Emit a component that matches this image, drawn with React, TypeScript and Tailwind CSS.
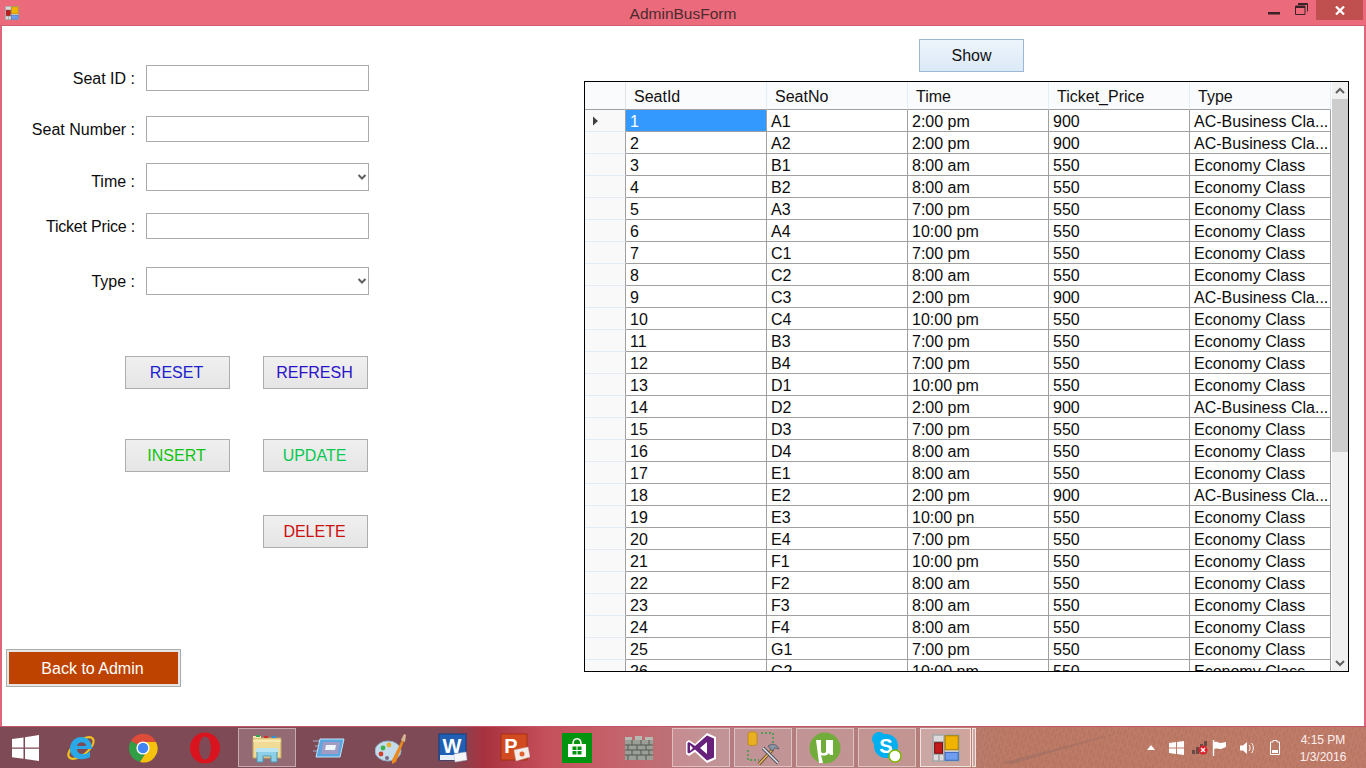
import type { ReactNode } from 'react'

const SEATS = [
  ['1', 'A1', '2:00 pm', '900', 'AC-Business Cla...'],
  ['2', 'A2', '2:00 pm', '900', 'AC-Business Cla...'],
  ['3', 'B1', '8:00 am', '550', 'Economy Class'],
  ['4', 'B2', '8:00 am', '550', 'Economy Class'],
  ['5', 'A3', '7:00 pm', '550', 'Economy Class'],
  ['6', 'A4', '10:00 pm', '550', 'Economy Class'],
  ['7', 'C1', '7:00 pm', '550', 'Economy Class'],
  ['8', 'C2', '8:00 am', '550', 'Economy Class'],
  ['9', 'C3', '2:00 pm', '900', 'AC-Business Cla...'],
  ['10', 'C4', '10:00 pm', '550', 'Economy Class'],
  ['11', 'B3', '7:00 pm', '550', 'Economy Class'],
  ['12', 'B4', '7:00 pm', '550', 'Economy Class'],
  ['13', 'D1', '10:00 pm', '550', 'Economy Class'],
  ['14', 'D2', '2:00 pm', '900', 'AC-Business Cla...'],
  ['15', 'D3', '7:00 pm', '550', 'Economy Class'],
  ['16', 'D4', '8:00 am', '550', 'Economy Class'],
  ['17', 'E1', '8:00 am', '550', 'Economy Class'],
  ['18', 'E2', '2:00 pm', '900', 'AC-Business Cla...'],
  ['19', 'E3', '10:00 pn', '550', 'Economy Class'],
  ['20', 'E4', '7:00 pm', '550', 'Economy Class'],
  ['21', 'F1', '10:00 pm', '550', 'Economy Class'],
  ['22', 'F2', '8:00 am', '550', 'Economy Class'],
  ['23', 'F3', '8:00 am', '550', 'Economy Class'],
  ['24', 'F4', '8:00 am', '550', 'Economy Class'],
  ['25', 'G1', '7:00 pm', '550', 'Economy Class'],
  ['26', 'G2', '10:00 pm', '550', 'Economy Class'],
]

const HEADERS = ['SeatId', 'SeatNo', 'Time', 'Ticket_Price', 'Type']

function FormIcon({ size = 16 }: { size?: number }) {
  return (
    <svg width={size} height={size} viewBox="0 0 16 16">
      <rect x="0.5" y="0.5" width="15" height="15" fill="#dcdcdc" stroke="#a8a8a8" />
      <path d="M0 4.500h7M7 0v16M0 11.500h7M4 11.500V16" stroke="#a8a8a8" />
      <rect x="7.500" y="1" width="7.500" height="8" fill="#f0b400" stroke="#a87a00" strokeWidth="0.6" />
      <rect x="7.500" y="10.500" width="7.500" height="4.500" fill="#6f9df0" stroke="#3d67b8" strokeWidth="0.6" />
      <rect x="1.500" y="5" width="4.500" height="6" fill="#c41a1a" stroke="#7a0f0f" strokeWidth="0.6" />
    </svg>
  )
}

function Field({
  label,
  select,
  className,
  labelClass,
}: {
  label: string
  select?: boolean
  className: string
  labelClass?: string
}) {
  return (
    <div className={`flex items-center ${className}`}>
      <span className={`w-[133px] whitespace-nowrap text-right text-[#0c0c0c] ${labelClass ?? 'pt-[2px]'}`}>
        {label} :
      </span>
      <div
        className={`relative ml-[11px] w-[223px] border border-[#ababab] bg-white ${select ? 'h-[28px]' : 'h-[26px]'}`}
      >
        {select ? (
          <svg className="absolute right-[1px] top-[8px]" width="10" height="10" viewBox="0 0 10 10">
            <path d="M1.500 3 5 6.500 8.500 3" fill="none" stroke="#606060" strokeWidth="2" />
          </svg>
        ) : null}
      </div>
    </div>
  )
}

function GrayButton({ text, color }: { text: string; color: string }) {
  return (
    <button
      type="button"
      className={`h-[33px] w-[105px] border border-[#adadad] bg-gradient-to-b from-[#f0f0f0] to-[#e5e5e5] pr-[2px] text-center ${color}`}
    >
      {text}
    </button>
  )
}

function DataGrid() {
  return (
    <div className="relative h-[591px] w-[765px] overflow-hidden border border-black bg-white">
      {/* header */}
      <div className="flex h-[28px] bg-[#fafbfc] text-[#111]">
        <div className="w-[41px] border-r border-b border-r-[#dfe3e8] border-b-[#a0a0a0]" />
        {HEADERS.map((h) => (
          <div
            key={h}
            className="flex w-[141px] items-center border-r border-b border-r-[#e3edf8] border-b-[#a0a0a0] pl-[8px] pt-[3px]"
          >
            {h}
          </div>
        ))}
      </div>
      {/* rows */}
      {SEATS.map((row, i) => (
        <div key={row[0]} className="flex h-[22px] text-[#0c0c0c]">
          <div className="flex w-[41px] items-center border-r border-b border-r-[#a0a0a0] border-b-[#e4edf7] bg-[#f9f9f9] pl-[7px]">
            {i === 0 ? (
              <svg width="7" height="10" viewBox="0 0 7 10">
                <path d="M1 0.500 6 5 1 9.500Z" fill="#404040" />
              </svg>
            ) : null}
          </div>
          {row.map((cell, c) => (
            <div
              key={c}
              className={`flex w-[141px] items-center whitespace-nowrap border-r border-b border-[#a0a0a0] pl-[4px] pt-[2px] ${i === 0 && c === 0 ? 'bg-[#3399ff] text-white' : ''}`}
            >
              {cell}
            </div>
          ))}
        </div>
      ))}
      {/* scrollbar */}
      <div className="absolute right-0 top-0 flex h-full w-[16px] flex-col bg-[#f0f0f0]">
        <div className="flex h-[17px] items-center justify-center">
          <svg width="10" height="8" viewBox="0 0 10 8">
            <path d="M1 6 5 2 9 6" fill="none" stroke="#606060" strokeWidth="2" />
          </svg>
        </div>
        <div className="h-[353px] bg-[#cdcdcd]" />
        <div className="flex-1" />
        <div className="flex h-[17px] items-center justify-center">
          <svg width="10" height="8" viewBox="0 0 10 8">
            <path d="M1 2 5 6 9 2" fill="none" stroke="#606060" strokeWidth="2" />
          </svg>
        </div>
      </div>
    </div>
  )
}

function TaskSlot({ children, boxed }: { children: ReactNode; boxed?: boolean }) {
  return (
    <div className="flex h-[41px] w-[62px] items-center justify-center">
      <div
        className={`flex h-[39px] w-[58px] items-center justify-center ${
          boxed ? 'border border-[#ffffff70] bg-[#ffffff2e]' : ''
        }`}
      >
        {children}
      </div>
    </div>
  )
}

const IeIcon = (
  <svg width="32" height="32" viewBox="0 0 32 32">
    <ellipse cx="16" cy="16" rx="15" ry="7" fill="none" stroke="#f0c020" strokeWidth="2.200" transform="rotate(-38 16 16)" />
    <path d="M5 17C5 9 11 5 16 5c6 0 11 4 11 12H12c0 6 9 7 13 2v6c-5 3-13 3-17-1-2-2-3-4-3-7Zm7-3h9c0-5-8-5-9 0Z" fill="#29a9e8" />
  </svg>
)

const ChromeIcon = (
  <svg width="30" height="30" viewBox="0 0 30 30">
    <path d="M15 15 3 8A14 14 0 0 1 28 9L15 9Z" fill="#dd4b39" />
    <path d="M15 15 3 8a14 14 0 0 0 9 21l7-11Z" fill="#2f9e44" />
    <path d="M15 9h13a14 14 0 0 1-16 20l7-11Z" fill="#f4c20d" />
    <circle cx="15" cy="15" r="6.600" fill="#fff" />
    <circle cx="15" cy="15" r="5.200" fill="#4285f4" />
  </svg>
)

const OperaIcon = (
  <svg width="32" height="32" viewBox="0 0 32 32">
    <path
      d="M1 16a15 15.500 0 1 0 30 0a15 15.500 0 1 0-30 0ZM10 16a6 11.500 0 1 1 12 0a6 11.500 0 1 1-12 0Z"
      fill="#d9141e"
      fillRule="evenodd"
    />
  </svg>
)

const ExplorerIcon = (
  <svg width="32" height="32" viewBox="0 0 32 32">
    <path d="M2 6h28v20H2Z" fill="#f0dc96" stroke="#c0a860" />
    <path d="M2 4h8v2H2Z" fill="#f4e8b0" />
    <path d="M5 3h4v2H5Z" fill="#2fa84f" />
    <path d="M13 4h4v2h-4Z" fill="#d03030" />
    <path d="M21 4h4v2h-4Z" fill="#2f8fd8" />
    <path d="M2 9h28" stroke="#fff6c8" />
    <path d="M6 30V18h20v12h-6v-6h-8v6Z" fill="#8ccfe8" stroke="#4a94b8" />
    <path d="M4 20h24l-2-4H6Z" fill="#b8e4f4" />
  </svg>
)

const CardIcon = (
  <svg width="32" height="24" viewBox="0 0 32 24">
    <path d="M0 5h7M2 10h5M0 15h5" stroke="#9fb0d0" />
    <path d="M7 3h24l-4 18H3Z" fill="#5aa6e0" stroke="#bfe4fa" />
    <path d="M10 6h17l-2 12H8Z" fill="#a09cc4" />
    <path d="M13 9h10l-1 5H12Z" fill="#eef6fc" />
  </svg>
)

const PaintIcon = (
  <svg width="32" height="32" viewBox="0 0 32 32">
    <ellipse cx="13" cy="19" rx="13" ry="10" fill="#c4dcec" stroke="#8fb0c8" />
    <circle cx="8" cy="16" r="2.400" fill="#3bb24a" />
    <circle cx="14" cy="13" r="2.400" fill="#e8b030" />
    <circle cx="6" cy="22" r="2.400" fill="#d04030" />
    <circle cx="12" cy="26" r="2" fill="#7a6a8a" />
    <path d="M17 28 27 8l2 1-8 21-4 2Z" fill="#e88a20" />
    <path d="M26 8l3-6 2 1-1 7Z" fill="#d8b890" />
  </svg>
)

const WordIcon = (
  <svg width="30" height="30" viewBox="0 0 30 30">
    <rect x="1" y="1" width="27" height="26" fill="#1f5fb4" stroke="#123f80" />
    <path d="M2 22h24v5H2Z" fill="#e8eef6" />
    <path d="M16 21l12-2 1 8-12 2Z" fill="#f4f6fa" stroke="#b8c4d4" strokeWidth="0.500" />
    <text x="14" y="20" textAnchor="middle" fontSize="20" fontWeight="700" fill="#fff" fontFamily="Liberation Sans">W</text>
  </svg>
)

const PptIcon = (
  <svg width="30" height="30" viewBox="0 0 30 30">
    <rect x="1" y="1" width="26" height="26" fill="#d24a20" stroke="#a83010" />
    <path d="M14 17l14-3 2 10-14 4Z" fill="#f4ece8" stroke="#c8b0a8" strokeWidth="0.500" />
    <circle cx="22" cy="21" r="2.500" fill="#e06030" />
    <text x="11" y="20" textAnchor="middle" fontSize="20" fontWeight="700" fill="#fff" fontFamily="Liberation Sans">P</text>
  </svg>
)

const StoreIcon = (
  <svg width="30" height="30" viewBox="0 0 30 30">
    <rect width="30" height="30" fill="#00940f" />
    <path d="M6 11h18v13H6Z" fill="#fff" />
    <path d="M11 11c0-7 8-7 8 0" fill="none" stroke="#fff" strokeWidth="1.600" />
    <path d="M10.500 13.500h4v3.500h-4ZM15.500 13.500h4v3.500h-4ZM10.500 18h4v3.500h-4ZM15.500 18h4v3.500h-4Z" fill="#00940f" />
  </svg>
)

const WallIcon = (
  <svg width="30" height="26" viewBox="0 0 30 26">
    <path d="M1 5h28v20H1Z" fill="#9a9f98" />
    <path d="M1 2h7v3H1ZM11 1h7v4h-7ZM21 2h8v3h-8Z" fill="#b4b9b2" />
    <path d="M1 10h28M1 15h28M1 20h28M8 5v5M17 5v5M25 5v5M4 10v5M13 10v5M22 10v5M8 15v5M17 15v5M25 15v5M4 20v5M13 20v5M22 20v5" stroke="#55594f" />
  </svg>
)

const VsIcon = (
  <svg width="32" height="32" viewBox="0 0 32 32">
    <path d="M22 1 31 5v22l-9 4-12-11-6 4-3-2V10l3-2 6 4Z" fill="#fff" />
    <path d="M22 3.500 29 6.500v19l-7 3-12-11-6 4-1.500-1V11l1.500-1 6 4ZM22 10l-7 6 7 6ZM5 13v6l3-3Z" fill="#68217a" fillRule="evenodd" />
  </svg>
)

const ToolsIcon = (
  <svg width="32" height="34" viewBox="0 0 32 34">
    <path d="M1 3c0-3 9-3 9 0v10c0 2-9 2-9 0Z" fill="#e8b020" stroke="#a87800" strokeWidth="0.600" />
    <path d="M14 2h12v11M1 19v10h11" fill="none" stroke="#2f9e44" strokeWidth="1.400" strokeDasharray="2 2" />
    <path d="M12 33 26 18" stroke="#5a4420" strokeWidth="3.200" />
    <path d="M12 33 26 18" stroke="#e8b860" strokeWidth="1.600" />
    <path d="M16 17 31 32" stroke="#3c4450" strokeWidth="3.200" />
    <path d="M16 17 31 32" stroke="#e4e8ee" strokeWidth="1.600" />
    <path d="M21 15c4-3 9-2 11 3l-4-1-3 3Z" fill="#8894a4" stroke="#3c4450" strokeWidth="0.600" />
  </svg>
)

const TorrentIcon = (
  <svg width="32" height="32" viewBox="0 0 32 32">
    <circle cx="16" cy="16" r="15.500" fill="#72ad3b" />
    <path d="M7 8h5v11c0 3 5 3 5 0V8h7v15h-3l-1-2c-2 3-6 3-8 2l2 8h-4Z" fill="#fff" />
  </svg>
)

const SkypeIcon = (
  <svg width="32" height="32" viewBox="0 0 32 32">
    <circle cx="15" cy="14" r="12" fill="#00aff0" />
    <circle cx="8" cy="7" r="7" fill="#00aff0" />
    <text x="15" y="21" textAnchor="middle" fontSize="20" fontWeight="700" fill="#fff" fontFamily="Liberation Sans">S</text>
    <circle cx="24" cy="24" r="6" fill="#fff" stroke="#7ab800" strokeWidth="1.500" />
  </svg>
)

function TraySlot({ width, children }: { width: string; children: ReactNode }) {
  return <div className={`flex items-center justify-center ${width}`}>{children}</div>
}

function Taskbar() {
  return (
    <div className="relative flex h-[41px] items-center overflow-hidden bg-[linear-gradient(90deg,#7d4a56_0%,#7d4a56_33%,#a8323e_35.500%,#c5505c_40%,#c4666e_46%,#b47c80_52%,#b57e7a_68%,#bd7a66_74%,#c07c6a_100%)]">
      {/* wallpaper showing through the glass */}
      <svg className="absolute inset-0" width="1366" height="41" viewBox="0 0 1366 41">
        <defs>
          <pattern id="straw" width="7" height="9" patternUnits="userSpaceOnUse" patternTransform="rotate(14)">
            <path d="M1 0v6M4 3v6" stroke="#8e5a40" strokeWidth="0.800" opacity="0.45" />
          </pattern>
        </defs>
        <path d="M975 0h391v41H975Z" fill="url(#straw)" />
        <path d="M1000 36 1117 6l8-2L1012 37Z" fill="#9c6e66" opacity="0.6" />
      </svg>
      <div className="relative flex h-full w-[50px] items-center justify-center">
        <svg width="27" height="26" viewBox="0 0 27 26">
          <path d="M0 4 11.500 2.400V12.400H0ZM13 2.200 27 0V12.400H13ZM0 13.800H11.500V23.800L0 22.200ZM13 13.800H27V26L13 24Z" fill="#fff" />
        </svg>
      </div>
      <div className="relative flex h-full">
        <TaskSlot>{IeIcon}</TaskSlot>
        <TaskSlot>{ChromeIcon}</TaskSlot>
        <TaskSlot>{OperaIcon}</TaskSlot>
        <TaskSlot boxed>{ExplorerIcon}</TaskSlot>
        <TaskSlot>{CardIcon}</TaskSlot>
        <TaskSlot>{PaintIcon}</TaskSlot>
        <TaskSlot>{WordIcon}</TaskSlot>
        <TaskSlot>{PptIcon}</TaskSlot>
        <TaskSlot>{StoreIcon}</TaskSlot>
        <TaskSlot>{WallIcon}</TaskSlot>
        <TaskSlot boxed>{VsIcon}</TaskSlot>
        <TaskSlot boxed>{ToolsIcon}</TaskSlot>
        <TaskSlot boxed>{TorrentIcon}</TaskSlot>
        <TaskSlot boxed>{SkypeIcon}</TaskSlot>
        <div className="ml-[2px] flex h-full items-center">
          <div className="flex h-[39px] w-[51px] items-center justify-center border border-[#ffffffb0] bg-[#ffffff50]">
            <FormIcon size={28} />
          </div>
          <div className="ml-[1px] h-[39px] w-[4px] border border-[#ffffffb0] bg-[#ffffff50]" />
        </div>
      </div>
      <div className="relative ml-auto flex h-full items-center text-white">
        <TraySlot width="w-[14px]">
          <svg width="8" height="5" viewBox="0 0 8 5">
            <path d="M0 5 4 0 8 5Z" fill="#fff" />
          </svg>
        </TraySlot>
        <TraySlot width="w-[36px]">
          <svg width="15" height="14" viewBox="0 0 15 14">
            <path d="M0 2 7 1V6.500H0ZM8 1 15 0V6.500H8ZM0 7.500H7V13L0 12ZM8 7.500H15V14L8 13Z" fill="#fff" />
          </svg>
        </TraySlot>
        <TraySlot width="w-[12px]">
          <svg className="shrink-0" width="18" height="14" viewBox="0 0 18 14">
            <path d="M1 9h3v4H1ZM5 6h3v7H5ZM9 3h3v5H9ZM13 0h3v5h-3Z" fill="#6a4a46" />
            <circle cx="12" cy="9" r="4.500" fill="#d8202a" />
            <path d="M10 7l4 4M14 7l-4 4" stroke="#fff" strokeWidth="1.400" />
          </svg>
        </TraySlot>
        <TraySlot width="w-[28px]">
          <svg width="16" height="16" viewBox="0 0 16 16">
            <path d="M1.500 0V16" stroke="#fff" strokeWidth="1.400" />
            <path d="M2 2c4-1 4 1 7 1l5-1v5l-5 2c-3 0-3-1-7 0Z" fill="#fff" />
          </svg>
        </TraySlot>
        <TraySlot width="w-[26px]">
          <svg width="16" height="14" viewBox="0 0 16 14">
            <path d="M1 4.500h3L8 1v12L4 9.500H1Z" fill="#fff" />
            <path d="M10 4c1.500 2 1.500 4 0 6M12.500 2c2.500 3 2.500 7 0 10" fill="none" stroke="#fff" />
          </svg>
        </TraySlot>
        <TraySlot width="w-[30px]">
          <svg width="10" height="15" viewBox="0 0 10 15">
            <path d="M3 0.500h4V2h2.500v12.500H.5V2H3Z" fill="none" stroke="#fff" />
            <rect x="2" y="10" width="6" height="3" fill="#fff" />
          </svg>
        </TraySlot>
        <div className="ml-[8px] mr-[18px] flex w-[50px] flex-col items-center pt-[3px] text-[12px] leading-[17px] text-[#fdf0ee]">
          <span>4:15 PM</span>
          <span>1/3/2016</span>
        </div>
      </div>
    </div>
  )
}

export default function App() {
  return (
    <div className="flex h-[768px] w-[1366px] flex-col overflow-hidden bg-[#7d4a56] font-['Liberation_Sans',Arial,sans-serif] text-[16px] leading-none">
      {/* Window */}
      <div className="flex h-[727px] flex-col border-b-[1px] border-[#c45468] bg-[#e0647a]">
        {/* Title bar */}
        <div className="relative flex h-[26px] items-center justify-center border-b border-[#d15f70] bg-[#eb6a7c]">
          <div className="absolute left-[5px] top-[6px]">
            <FormIcon size={14} />
          </div>
          <span className="pt-[3px] text-[15.500px] text-[#4c2a2e]">AdminBusForm</span>
          <div className="absolute right-0 top-0 flex items-start">
            <svg className="mt-[12px]" width="12" height="3" viewBox="0 0 12 3">
              <rect width="12" height="2.500" fill="#3a2226" />
            </svg>
            <svg className="ml-[15px] mt-[3px]" width="13" height="12" viewBox="0 0 13 12">
              <path d="M3 .5h9.500v8M.5 3h9.500v8.500H.5ZM.5 3v1.500h9.500" fill="none" stroke="#3a2226" />
              <path d="M3 .5h9.500v1.500H3ZM.5 3h9.500v1.500H.5Z" fill="#3a2226" />
            </svg>
            <div className="ml-[8px] mr-[3px] flex h-[20px] w-[47px] items-center justify-center bg-[#c0504f]">
              <svg width="10" height="9" viewBox="0 0 10 9">
                <path d="M1 .5 9 8.500M9 .5 1 8.500" stroke="#fff" strokeWidth="2.200" />
              </svg>
            </div>
          </div>
        </div>
        {/* Client area */}
        <div className="mx-[2px] flex flex-1 bg-white">
          {/* Left form */}
          <div className="flex w-[582px] flex-col">
            <Field label="Seat ID" className="mt-[39px]" />
            <Field label="Seat Number" className="mt-[25px]" />
            <Field label="Time" select className="mt-[21px]" labelClass="pt-[10px]" />
            <Field label="Ticket Price" className="mt-[22px]" labelClass="pt-[2px] tracking-[-0.2px]" />
            <Field label="Type" select className="mt-[28px]" />
            <div className="ml-[123px] mt-[61px] flex gap-[33px]">
              <GrayButton text="RESET" color="text-[#1a22cc]" />
              <GrayButton text="REFRESH" color="text-[#2a12c8]" />
            </div>
            <div className="ml-[123px] mt-[50px] flex gap-[33px]">
              <GrayButton text="INSERT" color="text-[#0fc40f]" />
              <GrayButton text="UPDATE" color="text-[#08c850]" />
            </div>
            <div className="ml-[261px] mt-[43px] flex">
              <GrayButton text="DELETE" color="text-[#cc1010]" />
            </div>
            <div className="ml-[4px] mt-[101px] h-[38px] w-[175px] border border-[#adadad] bg-[#e5e5e5] p-[2px]">
              <button type="button" className="h-full w-full bg-[#bf4300] pr-[2px] pt-[2px] text-center text-white">
                Back to Admin
              </button>
            </div>
          </div>
          {/* Right side */}
          <div className="flex flex-col">
            <button
              type="button"
              className="ml-[335px] mt-[13px] h-[33px] w-[105px] border border-[#9cb8d4] bg-gradient-to-b from-[#eef5fc] to-[#dbe9f7] text-center text-[#111]"
            >
              Show
            </button>
            <div className="mt-[9px]">
              <DataGrid />
            </div>
          </div>
        </div>
      </div>
      <Taskbar />
    </div>
  )
}
